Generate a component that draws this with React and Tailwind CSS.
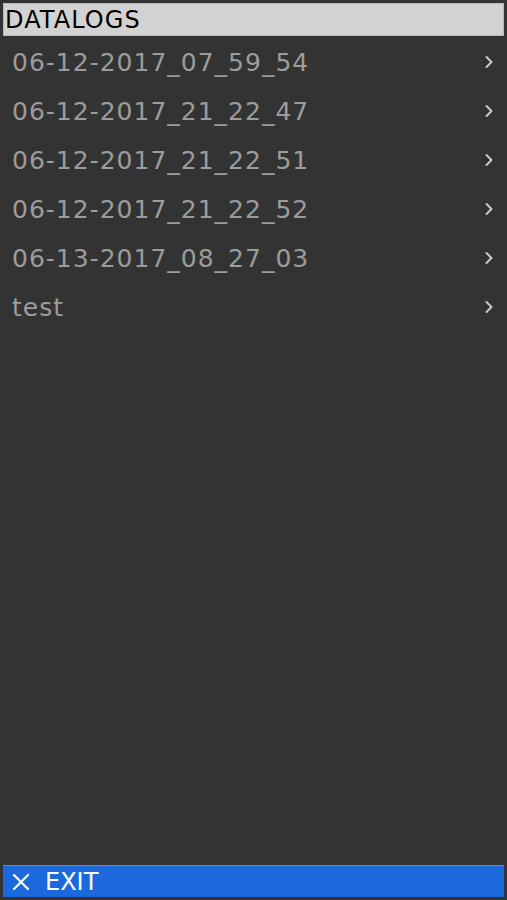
import React from 'react';

const logs = [
  '06-12-2017_07_59_54',
  '06-12-2017_21_22_47',
  '06-12-2017_21_22_51',
  '06-12-2017_21_22_52',
  '06-13-2017_08_27_03',
  'test',
];

function Chevron() {
  return (
    <svg width="10" height="14" viewBox="0 0 10 14" fill="none">
      <path d="M2.5 2 L7.5 7 L2.5 12" stroke="#c9c9c9" strokeWidth="2" strokeLinecap="round" strokeLinejoin="round" />
    </svg>
  );
}

export default function App() {
  return (
    <div
      className="h-[900px] w-[507px] bg-[#333333] flex flex-col p-[3px]"
      style={{ fontFamily: '"DejaVu Sans", Verdana, sans-serif' }}
    >
      <div className="h-[33px] flex items-center bg-[#d2d2d2] border border-[#b8b8b8] pl-[1px]">
        <span className="text-[24px] tracking-[1.1px] text-black leading-none">DATALOGS</span>
      </div>

      <div className="flex-1 flex flex-col">
        {logs.map((name) => (
          <div key={name} className="h-[49px] flex items-center justify-between pl-[9px] pr-[10px] pt-[3px]">
            <span className="text-[25px] tracking-[1px] text-[#9c9c9c] leading-none">{name}</span>
            <Chevron />
          </div>
        ))}
      </div>

      <div className="h-[32px] flex items-center gap-[15px] bg-[#1b69dd] border-t border-[#4a8ef0] pl-[9px]">
        <svg width="18" height="18" viewBox="0 0 18 18" fill="none">
          <path d="M2 2 L16 16 M16 2 L2 16" stroke="white" strokeWidth="2.2" strokeLinecap="round" />
        </svg>
        <span className="text-[24px] text-white leading-none">EXIT</span>
      </div>
    </div>
  );
}
